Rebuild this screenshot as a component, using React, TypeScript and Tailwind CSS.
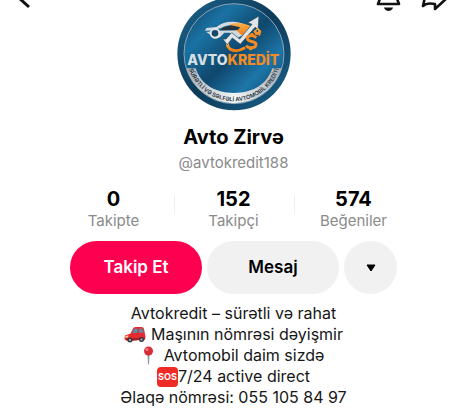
import React from 'react';

const Avatar: React.FC = () => (
  <svg viewBox="0 0 342 333" className="w-[114px] h-[111px]" role="img" aria-label="Avtokredit logo">
    <defs>
      <linearGradient id="disc" x1="0" y1="0" x2="1" y2="1">
        <stop offset="0" stopColor="#0d3f63" />
        <stop offset="0.25" stopColor="#1a72a3" />
        <stop offset="0.5" stopColor="#0f476d" />
        <stop offset="0.72" stopColor="#1d76a8" />
        <stop offset="1" stopColor="#0c3a5c" />
      </linearGradient>
      <linearGradient id="rim" x1="0" y1="0" x2="1" y2="1">
        <stop offset="0" stopColor="#1c6690" />
        <stop offset="0.5" stopColor="#0d3a59" />
        <stop offset="1" stopColor="#1a638d" />
      </linearGradient>
      <linearGradient id="silver" x1="0" y1="0" x2="1" y2="0">
        <stop offset="0" stopColor="#a9b2b9" />
        <stop offset="0.5" stopColor="#f2f4f5" />
        <stop offset="1" stopColor="#a9b2b9" />
      </linearGradient>
      <linearGradient id="orange" x1="0" y1="0" x2="0" y2="1">
        <stop offset="0" stopColor="#fbb04a" />
        <stop offset="1" stopColor="#f07d12" />
      </linearGradient>
      <path id="motto" d="M35 205 A143 143 0 0 0 307 205" />
    </defs>
    <circle cx="171" cy="161" r="170" fill="url(#rim)" />
    <circle cx="171" cy="161" r="150" fill="url(#disc)" stroke="#8ba3b3" strokeWidth="3" />
    <path d="M28 205 H56 C71 252 113 279 171 279 C229 279 271 252 286 205 H314 A150 150 0 0 1 28 205 Z" fill="url(#silver)" />

    {/* car */}
    <path d="M84 92 L88 84 L118 81 C132 69 150 64 170 65 C188 66 201 71 210 78 L184 77 C166 73 148 75 134 83 L112 91 Z" fill="#d3d9dd" />
    <path d="M136 85 C149 76 169 75 187 82 L180 91 H131 Z" fill="#27333c" />
    <path d="M88 96 L118 92 L190 91 L208 83 L218 81 L208 99 L178 116 L158 98 H142 L132 109 C126 116 112 118 105 111 L98 103 Z" fill="#d3d9dd" />
    <path d="M157 74 C181 64 205 71 222 79 L210 96 L194 106 L180 93 L190 82 Z" fill="url(#orange)" />
    <circle cx="114" cy="100" r="13" fill="#17496b" stroke="#e3e8eb" strokeWidth="6" />

    {/* growth arrow */}
    <path d="M151 128 C150 153 178 159 204 143" fill="none" stroke="url(#orange)" strokeWidth="9" />
    <path d="M137 117 H147 L164 98 L188 117 L225 73 L212 68 L246 48 L243 88 L234 82 L190 133 L166 114 L151 134 Z" fill="#e1e6e9" stroke="#26465c" strokeWidth="2" />
    <path d="M238 113 C228 103 210 106 211 116 C212 128 238 121 237 134 C236 146 215 146 207 137 M225 99 V106 M221 143 V151" fill="none" stroke="#f48b22" strokeWidth="9" />
    <path d="M229 94 L243 83 L253 94 L249 109 L242 104 L236 106 Z" fill="url(#orange)" />
    <circle cx="241" cy="93" r="3" fill="#14598a" />

    <text x="31" y="196" fontSize="42" fontWeight="800" fill="#d9e0e4" className="font-[Inter,sans-serif]">
      AVTO<tspan fill="#f48b22">KREDİT</tspan>
    </text>
    <text fontSize="17" fontWeight="600" fill="#26333d" className="font-[Inter,sans-serif]">
      <textPath href="#motto" startOffset="50%" textAnchor="middle">SÜRƏTLİ VƏ SƏLFƏLİ AVTOMOBİL KREDİTİ</textPath>
    </text>
  </svg>
);

const Car: React.FC = () => (
  <svg viewBox="0 0 44 34" className="w-[22px] h-[17px] shrink-0" aria-hidden="true">
    <path d="M2 19 L13 15 L18 5 Q19 2 23 2 H35 Q39 2 40 6 L42 16 Q44 22 42 27 L8 30 Q1 29 1 24 Z" fill="#e52b2f" />
    <path d="M16 14 L20 6 Q21 5 24 5 H27 V14 Z M30 5 H35 Q37 5 38 8 L39 13 L30 14 Z" fill="#5e8ba3" />
    <path d="M2 25 L42 23 V27 L8 30 Z" fill="#a81c24" />
    <path d="M3 20 L9 19 L8 23 H2 Z" fill="#ffd9a0" />
    <circle cx="12" cy="28" r="5" fill="#373b40" />
    <circle cx="12" cy="28" r="2" fill="#b7bcc0" />
    <circle cx="35" cy="27" r="5" fill="#373b40" />
    <circle cx="35" cy="27" r="2" fill="#b7bcc0" />
  </svg>
);

const Pin: React.FC = () => (
  <svg viewBox="0 0 22 40" className="w-[11px] h-5 shrink-0" aria-hidden="true">
    <path d="M9 17 H13 L12 36 Q11 39 10 36 Z" fill="#8d979e" />
    <circle cx="11" cy="10" r="9" fill="#dc2c38" />
    <circle cx="8" cy="7" r="3" fill="#f4868a" />
  </svg>
);

const stats = [
  { value: '0', label: 'Takipte' },
  { value: '152', label: 'Takipçi' },
  { value: '574', label: 'Beğeniler' },
];

export default function App() {
  return (
    <main className="bg-white pl-[17px] pb-2 text-black font-[Inter,'Noto_Sans',sans-serif]">
      <header className="grid grid-cols-[1fr_auto_1fr] items-start">
        <button type="button" aria-label="Geri" className="justify-self-start">
          <svg viewBox="0 0 14 12" className="w-3.5 h-3" fill="none" stroke="#111" strokeWidth="3">
            <path d="M2 -2 L12 7" />
          </svg>
        </button>
        <Avatar />
        <div className="flex justify-self-end gap-5">
          <button type="button" aria-label="Bildirimler">
            <svg viewBox="0 0 26 14" className="w-[26px] h-3.5">
              <path d="M6 -4 L3 4 H24 L21 -4" fill="none" stroke="#111" strokeWidth="2.6" strokeLinejoin="round" />
              <path d="M9 7.5 H18 C17 12 10 12 9 7.5 Z" fill="#111" />
            </svg>
          </button>
          <button type="button" aria-label="Paylaş">
            <svg viewBox="0 0 29 14" className="w-[29px] h-3.5" fill="none" stroke="#111" strokeWidth="2.6" strokeLinejoin="round">
              <path d="M4 -3 L2 6 C5 3 9 3 14 4 V9 L26 -2" />
            </svg>
          </button>
        </div>
      </header>

      <section className="mt-3 text-center">
        <h1 className="text-xl leading-7 font-bold">Avto Zirvə</h1>
        <p className="text-[15px] leading-6 text-[#8a8a8a]">@avtokredit188</p>
      </section>

      <dl className="mx-auto mt-3 grid max-w-[360px] grid-cols-3 text-center">
        {stats.map((stat, i) => (
          <div key={stat.label} className="relative flex flex-col-reverse">
            {i > 0 && <span className="absolute left-0 top-2 h-5 w-px bg-[#f0f0f0]" />}
            <dt className="text-[15px] leading-5 text-[#8a8a8a]">{stat.label}</dt>
            <dd className="text-xl leading-6 font-bold">{stat.value}</dd>
          </div>
        ))}
      </dl>

      <div className="mt-[10px] flex justify-center gap-[5px] text-[17px] font-semibold">
        <button type="button" className="h-[53px] w-[132px] rounded-full bg-[#fe0050] text-white">Takip Et</button>
        <button type="button" className="h-[53px] w-[132px] rounded-full bg-[#f1f1f1]">Mesaj</button>
        <button type="button" aria-label="Daha fazla" className="flex h-[53px] w-[53px] items-center justify-center rounded-full bg-[#f1f1f1]">
          <svg viewBox="0 0 10 8" className="w-2.5 h-2">
            <path d="M1 1 H9 L5 7 Z" fill="#000" stroke="#000" strokeLinejoin="round" />
          </svg>
        </button>
      </div>

      <section className="mt-[9px] flex flex-col items-center text-base leading-[21px] text-[#161616]">
        <p>Avtokredit – sürətli və rahat</p>
        <p className="flex items-center gap-[5px]"><Car />Maşının nömrəsi dəyişmir</p>
        <p className="flex items-center gap-[10px]"><Pin />Avtomobil daim sizdə</p>
        <p className="flex items-center">
          <span className="flex h-5 w-[21px] items-center justify-center rounded-sm bg-[#ee2b24] text-[9px] font-bold text-white">SOS</span>
          7/24 active direct
        </p>
        <p>Əlaqə nömrəsi: 055 105 84 97</p>
      </section>
    </main>
  );
}
